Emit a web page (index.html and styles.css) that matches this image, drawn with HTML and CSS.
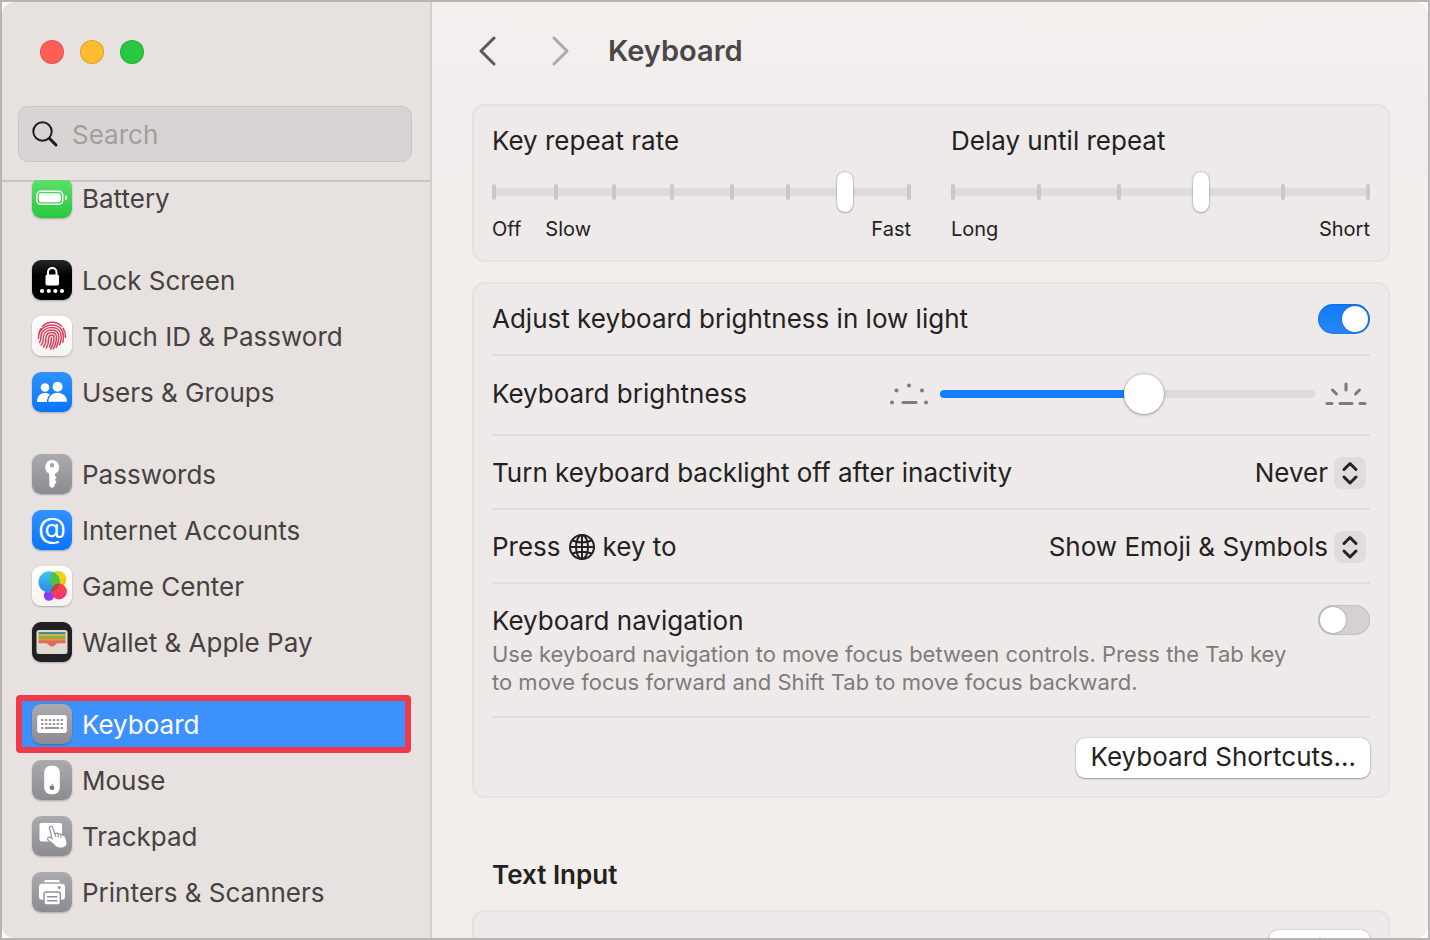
FILE: index.html
```html
<!DOCTYPE html>
<html lang="en">
<head>
<meta charset="utf-8">
<meta name="viewport" content="width=device-width, initial-scale=1">
<title>Keyboard</title>
<link rel="stylesheet" href="styles.css">
</head>
<body>
<div class="frame">
<div class="window">
  <aside class="sidebar">
    <div class="lights">
      <button class="light light-close" aria-label="Close"></button>
      <button class="light light-min" aria-label="Minimize"></button>
      <button class="light light-zoom" aria-label="Zoom"></button>
    </div>
    <label class="search">
      <svg class="search-icon" viewBox="0 0 28 28" aria-hidden="true"><circle cx="10.500" cy="11.500" r="9.200"/><path d="M17.500 18.500l6.500 6.500" class="handle"/></svg>
      <input class="search-input" type="search" placeholder="Search" aria-label="Search">
    </label>
    <nav class="list">
      <div class="group">
        <a class="item" href="#battery">
          <svg class="icon green" viewBox="0 0 40 40" aria-hidden="true"><rect x="4.800" y="13.200" width="26" height="13" rx="4" fill="none" stroke="#fff" stroke-width="1.400"/><rect x="6.800" y="15.200" width="22" height="9" rx="2.200" fill="#fff"/><path d="M33 17c3 1 3 4.500 0 5.500z" fill="#fff"/></svg>
          <span>Battery</span></a>
      </div>
      <div class="group">
        <a class="item" href="#lock">
          <svg class="icon black" viewBox="0 0 40 40" aria-hidden="true"><rect x="13.500" y="14.500" width="13.500" height="11" rx="1.800" fill="#fff"/><path d="M16 15v-3c0-5.500 8.500-5.500 8.500 0v3" fill="none" stroke="#fff" stroke-width="2"/><g fill="#fff"><circle cx="10" cy="31" r="2.100"/><circle cx="16.800" cy="31" r="2.100"/><circle cx="23.400" cy="31" r="2.100"/><circle cx="30" cy="31" r="2.100"/></g></svg>
          <span>Lock Screen</span></a>
        <a class="item" href="#touch-id">
          <svg class="icon white" viewBox="0 0 40 40" aria-hidden="true"><g fill="none" stroke="#d8405c" stroke-width="1.500" stroke-linecap="round"><path d="M10.500 10.200C16 5 24.500 5 29.500 10.200"/><path d="M7 16.500c.6-1.600 1.300-2.900 2.200-4"/><path d="M31 12.200c1.800 2.700 2.600 5.600 2.500 9"/><path d="M6.500 22.500c-.2-8 5.500-13.500 13.500-13.500 7 0 11.300 5 11.500 11.500 0 2-.2 4-.8 5.800"/><path d="M7.500 26.500c1.500-2 1.400-4 1.400-5.500.2-5.800 4.800-9.600 11.100-9.600 5.700 0 9 4 9.200 9.300 0 2.800-.5 5.600-1.500 8"/><path d="M9.200 29.200c2-2.400 2.200-5 2.200-7.700.2-4.500 3.600-7.600 8.500-7.600 4.200 0 6.700 2.800 6.900 6.800 0 3.600-.8 7.500-2.600 10.700"/><path d="M11.500 31c2-2.600 2.500-6 2.500-9 .2-3.300 2.500-5.600 5.800-5.600 2.900 0 4.500 2 4.600 4.400.1 4-1 8.500-3.200 12"/><path d="M14.300 32.200c1.800-3 2.300-6.500 2.300-10 .2-2 1.400-3.200 3.100-3.200 1.500 0 2.300 1.100 2.300 2.500 0 4-1.200 8.100-3.500 11.600"/><path d="M19.400 21.500c0 3.500-.6 6.500-1.800 9.500"/></g></svg>
          <span>Touch ID &amp; Password</span></a>
        <a class="item" href="#users">
          <svg class="icon blue" viewBox="0 0 40 40" aria-hidden="true"><g fill="#fff"><circle cx="13" cy="15.500" r="4.300"/><path d="M5 29.600c0-5.500 3.500-8.600 8-8.600 2 0 3.700.6 5 1.700-2 1.600-3 4-3.200 7.200H5.300z"/><circle cx="25.600" cy="14.700" r="5"/><path d="M16.400 29.800c0-5.500 4-9 9.200-9s9.400 3.500 9.400 9z"/></g></svg>
          <span>Users &amp; Groups</span></a>
      </div>
      <div class="group">
        <a class="item" href="#passwords">
          <svg class="icon gray" viewBox="0 0 40 40" aria-hidden="true"><path fill="#fff" fill-rule="evenodd" d="M20 6a7.200 7.200 0 0 1 3 13.700V22l1.600 1.800-1.800 2 1.800 2.200-1.900 2.200V32L20 34.200 17.300 32V19.700A7.200 7.200 0 0 1 20 6zm0 3a2.200 2.200 0 1 0 0 4.400A2.200 2.200 0 0 0 20 9z"/></svg>
          <span>Passwords</span></a>
        <a class="item" href="#internet">
          <svg class="icon blue" viewBox="0 0 40 40" aria-hidden="true"><text class="at" x="20" y="28" text-anchor="middle">@</text></svg>
          <span>Internet Accounts</span></a>
        <a class="item" href="#game-center">
          <svg class="icon white" viewBox="0 0 40 40" aria-hidden="true">
            <defs>
              <linearGradient id="gc1" x1="0" y1="0" x2="0" y2="1"><stop offset="0" stop-color="#3fc6e6"/><stop offset="1" stop-color="#2d86f0"/></linearGradient>
              <linearGradient id="gc2" x1="0" y1="0" x2="1" y2="1"><stop offset="0" stop-color="#b9da22"/><stop offset="0.600" stop-color="#fbd40c"/><stop offset="1" stop-color="#f9a11b"/></linearGradient>
              <linearGradient id="gc3" x1="0" y1="0" x2="0" y2="1"><stop offset="0" stop-color="#f4503a"/><stop offset="1" stop-color="#fb2c78"/></linearGradient>
              <clipPath id="gcc"><circle cx="17.200" cy="16" r="10.700"/></clipPath>
            </defs>
            <circle cx="17" cy="29.500" r="5.200" fill="#8a3df0"/><circle cx="26" cy="13.300" r="8.400" fill="url(#gc2)"/><circle cx="17.200" cy="16" r="10.700" fill="url(#gc1)"/><circle cx="26" cy="13.300" r="8.400" fill="#4fc24a" clip-path="url(#gcc)"/><circle cx="27" cy="25.500" r="7.900" fill="url(#gc3)"/><circle cx="27" cy="25.500" r="7.900" fill="#b8433f" clip-path="url(#gcc)"/></svg>
          <span>Game Center</span></a>
        <a class="item" href="#wallet">
          <svg class="icon wallet" viewBox="0 0 40 40" aria-hidden="true"><rect x="4.500" y="8" width="31" height="24" rx="2.500" fill="#dfdbd3"/><rect x="6.500" y="10" width="27" height="3" rx="1" fill="#4489a0"/><rect x="6.500" y="12" width="27" height="3" fill="#c9b54a"/><rect x="6.500" y="14.200" width="27" height="3" fill="#8faa3e"/><rect x="6.500" y="16.400" width="27" height="3" fill="#d79a48"/><path d="M6.500 18.500h27v2.700H26c-1.500 0-2 .8-2.600 1.600-1.500 2.300-5.300 2.300-6.800 0-.6-.8-1.100-1.600-2.600-1.600H6.500z" fill="#e4695a"/></svg>
          <span>Wallet &amp; Apple Pay</span></a>
      </div>
      <div class="group">
        <a class="item selected" href="#keyboard" aria-current="page">
          <svg class="icon gray" viewBox="0 0 40 40" aria-hidden="true"><rect x="5.200" y="11" width="29.600" height="18" rx="2.500" fill="#fff"/><g stroke="#98969a" stroke-width="2.200" fill="none"><path d="M9 16h22" stroke-dasharray="2.400 1.520"/><path d="M9 20h22" stroke-dasharray="2.400 1.520"/><path d="M9 24h2.400M12.900 24h14.200M28.600 24H31"/></g></svg>
          <span>Keyboard</span></a>
        <a class="item" href="#mouse">
          <svg class="icon gray" viewBox="0 0 40 40" aria-hidden="true"><rect x="12.200" y="5.800" width="15.600" height="28.400" rx="6.500" fill="#fff"/><path d="M20 25.800c1-.5 1.900-.3 2.300.4-.8.600-.7 1.800.1 2.300-.5 1.300-1.300 1.700-2.300 1.200-1 .5-1.800 0-2.400-1.500-.4-1.800.9-3.100 2.300-2.400zm-.1-.6c0-1 .6-1.600 1.400-1.800 0 1-.5 1.600-1.400 1.800z" fill="#77757a"/></svg>
          <span>Mouse</span></a>
        <a class="item" href="#trackpad">
          <svg class="icon gray" viewBox="0 0 40 40" aria-hidden="true"><rect x="7.500" y="7" width="22.500" height="18.500" rx="2" fill="#fff"/><path d="M17.300 11.500c.9-1.700 3-1.300 3.500.3l2 6c.7-1 2.300-.9 2.800.2.900-.8 2.300-.6 2.900.6 1-.6 2.300-.3 2.800.8 1.300 0 2.200.8 2.500 2l1.200 5c.6 3.200-1.600 5.200-4.500 5.600-4 .6-6.600-.7-8.700-3.200l-5.600-4.600c-1.200-1-.6-3 1.200-3 .9 0 1.800.5 2.600 1.200z" fill="#fff" stroke="#98969a" stroke-width="1.200"/><path d="M23 18l.8 2.500M26 18.800l.6 2.200M28.800 19.500l.5 1.800" stroke="#98969a" stroke-width="1.100" stroke-linecap="round"/></svg>
          <span>Trackpad</span></a>
        <a class="item" href="#printers">
          <svg class="icon gray" viewBox="0 0 40 40" aria-hidden="true"><path d="M12 10.200c.2-1.600 1-2.200 2.500-2.200h11c1.500 0 2.300.6 2.500 2.200z" fill="#fff"/><rect x="7" y="11.800" width="26" height="16" rx="3" fill="#fff"/><circle cx="27.300" cy="15.600" r="1.500" fill="#929096"/><rect x="12" y="20" width="16.400" height="13" rx="2.200" fill="#fff" stroke="#929096" stroke-width="1.500"/><path d="M15.500 24.700h9.400M15.500 28.700h9.400" stroke="#929096" stroke-width="1.500" stroke-linecap="round"/></svg>
          <span>Printers &amp; Scanners</span></a>
      </div>
    </nav>
  </aside>

  <main class="main">
    <header class="header">
      <button class="nav-button" aria-label="Back"><svg viewBox="0 0 20 30" aria-hidden="true"><path d="M17 2L4 15l13 13"/></svg></button>
      <button class="nav-button nav-forward" aria-label="Forward"><svg viewBox="0 0 20 30" aria-hidden="true"><path d="M4 2l13 13L4 28"/></svg></button>
      <h1 class="title">Keyboard</h1>
    </header>

    <section class="card repeat">
      <div class="repeat-field">
        <label for="rate">Key repeat rate</label>
        <div class="ticked">
          <div class="ticks ticks-rate"><i></i><i></i><i></i><i></i><i></i><i></i><i class="bare"></i><i></i></div>
          <input class="tick-slider" id="rate" type="range" min="0" max="7" value="6">
        </div>
        <div class="scale"><span>Off</span><span>Slow</span><span class="end">Fast</span></div>
      </div>
      <div class="repeat-field">
        <label for="delay">Delay until repeat</label>
        <div class="ticked">
          <div class="ticks ticks-delay"><i></i><i></i><i></i><i class="bare"></i><i></i><i></i></div>
          <input class="tick-slider" id="delay" type="range" min="0" max="5" value="3">
        </div>
        <div class="scale"><span>Long</span><span class="end">Short</span></div>
      </div>
    </section>

    <section class="card rows">
      <div class="row">
        <label for="auto">Adjust keyboard brightness in low light</label>
        <input class="switch" id="auto" type="checkbox" role="switch" checked>
      </div>
      <div class="row row-brightness">
        <label for="brightness">Keyboard brightness</label>
        <div class="brightness">
          <svg class="dim" viewBox="0 0 42 24" aria-hidden="true"><g class="dots"><circle cx="4" cy="20.500" r="2"/><circle cx="8.500" cy="8.500" r="2"/><circle cx="21" cy="3.500" r="2"/><circle cx="34" cy="8.500" r="2"/><circle cx="38" cy="20.500" r="2"/></g><path d="M15 20.500h13"/></svg>
          <input class="brightness-slider" id="brightness" type="range" min="0" max="100" value="55">
          <svg class="bright" viewBox="0 0 42 24" aria-hidden="true"><path d="M2 21.500h5M15 21.500h12M35 21.500h5M21 2v6M7.500 8l4 4M34.500 8l-4 4"/></svg>
        </div>
      </div>
      <div class="row row-picker">
        <label for="backlight">Turn keyboard backlight off after inactivity</label>
        <div class="picker">
          <select id="backlight"><option>Never</option></select>
          <svg class="stepper" viewBox="0 0 32 32" aria-hidden="true"><path d="M10 12.500l6-6 6 6M10 20l6 6 6-6"/></svg>
        </div>
      </div>
      <div class="row row-picker">
        <label class="globe-label" for="globe">Press <svg class="globe" viewBox="0 0 28 28" role="img" aria-label="globe"><circle cx="14" cy="14" r="12"/><ellipse cx="14" cy="14" rx="6" ry="12"/><path d="M14 2v24M2 14h24M4.500 7.500c5.500 2.500 13.500 2.500 19 0M4.500 20.500c5.500-2.500 13.500-2.500 19 0"/></svg> key to</label>
        <div class="picker">
          <select id="globe"><option>Show Emoji &amp; Symbols</option></select>
          <svg class="stepper" viewBox="0 0 32 32" aria-hidden="true"><path d="M10 12.500l6-6 6 6M10 20l6 6 6-6"/></svg>
        </div>
      </div>
      <div class="row row-nav">
        <div class="nav-text">
          <label for="nav">Keyboard navigation</label>
          <p class="hint">Use keyboard navigation to move focus between controls. Press the Tab key to move focus forward and Shift Tab to move focus backward.</p>
        </div>
        <input class="switch" id="nav" type="checkbox" role="switch">
      </div>
      <div class="row row-action">
        <button class="push">Keyboard Shortcuts...</button>
      </div>
    </section>

    <h2 class="section-title">Text Input</h2>
    <section class="card input-card">
      <button class="push">Edit...</button>
    </section>
  </main>
</div>
</div>
</body>
</html>
```
FILE: styles.css
```css
* { box-sizing: border-box; }
body, h1, h2, p { margin: 0; }
body {
  font-family: Inter, "Liberation Sans", sans-serif;
  font-size: 26px;
  line-height: 32px;
  color: #242221;
}
button, input, select { font: inherit; color: inherit; margin: 0; }
button { border: 0; padding: 0; background: none; }
.frame {
  height: 100vh;
  border: 2px solid #b8b4b3;
  background: #fff;
  overflow: hidden;
}
.window {
  display: flex;
  height: 100%;
  border-radius: 12px;
  overflow: hidden;
}

.sidebar {
  display: flex;
  flex-direction: column;
  flex: 0 0 430px;
  min-width: 0;
  background: #e7e1e0;
  border-right: 2px solid #d3cecd;
}
.lights { display: flex; gap: 16px; padding: 38px 38px 0; }
.light { width: 24px; height: 24px; border-radius: 50%; border: 1px solid #0002; }
.light-close { background: #ff5f57; }
.light-min { background: #febc2e; }
.light-zoom { background: #28c840; }
.search {
  display: flex;
  align-items: center;
  gap: 12px;
  height: 56px;
  margin: 42px 18px 18px 16px;
  padding: 0 13px;
  border: 1px solid #cbc6c5;
  border-radius: 10px;
  background: #d9d4d3;
}
.search-icon { flex: none; width: 28px; height: 28px; fill: none; stroke: #1d1b1b; stroke-width: 2; stroke-linecap: round; }
.search-icon .handle { stroke-width: 3; }
.search-input {
  flex: 1;
  min-width: 0;
  padding: 2px 0 0;
  border: 0;
  background: none;
  outline: 0;
  appearance: none;
}
.search-input::placeholder { color: #a29e9d; opacity: 1; }

.list {
  flex: 1;
  min-height: 0;
  overflow: hidden;
  padding: 0 20px 0 15px;
  box-shadow: inset 0 2px #c9c4c3;
}
.group { margin-bottom: 26px; }
.group:first-child { margin-top: -10px; }
.item {
  display: flex;
  align-items: center;
  gap: 10px;
  height: 56px;
  padding-left: 15px;
  color: #464241;
  text-decoration: none;
}
.item span { padding-top: 2px; }
.selected {
  background: #3d91fd;
  color: #fff;
  outline: 6px solid #f03a4a;
  outline-offset: -5px;
  border-radius: 3px;
}
.icon { flex: none; width: 40px; height: 40px; border-radius: 9px; box-shadow: 0 1px 2px #0004; }
.green { background: linear-gradient(#5ee06a, #27c93f); }
.black { background: linear-gradient(#262626, #000 40%); }
.white { background: linear-gradient(#fff, #f6f4f3); }
.blue { background: linear-gradient(#2f93ff, #0a74fb); }
.gray { background: linear-gradient(#abaaae, #8c8b90); }
.wallet { background: #212022; }
.at { font-size: 29px; font-weight: 400; fill: #fff; }

.main {
  flex: 1;
  min-width: 0;
  overflow: hidden;
  padding: 0 38px 0 40px;
  background: linear-gradient(#f4eeed, #f3eded 90px, #f1eeec 180px);
}
.header { display: flex; align-items: center; height: 98px; margin-bottom: 4px; }
.nav-button { margin-left: 5px; width: 20px; height: 30px; }
.nav-button svg { display: block; width: 20px; height: 30px; fill: none; stroke: #5c5857; stroke-width: 3; stroke-linecap: round; stroke-linejoin: round; }
.nav-forward { margin-left: 53px; }
.nav-forward svg { stroke: #aeaaa9; }
.title { margin-left: 38px; font-size: 29px; font-weight: 600; color: #4b4746; }

.card { border: 2px solid #e6e2e1; border-radius: 12px; background: #edeae9; }
.repeat { display: grid; grid-template-columns: 1fr 1fr; gap: 40px; padding: 19px 18px 15px; }
.repeat-field { display: flex; flex-direction: column; }
.ticked { display: grid; margin-top: 14px; }
.ticks, .tick-slider { grid-area: 1 / 1; }
.ticks {
  display: grid;
  align-self: center;
  height: 16px;
  background: linear-gradient(#dfdbda, #dfdbda) center / 100% 8px no-repeat;
}
.ticks-rate { grid-template-columns: 62fr 58fr 58fr 60fr 56fr 57fr 64fr 4px; }
.ticks-delay { grid-template-columns: 86fr 80fr 82fr 82fr 85fr 4px; }
.ticks i { width: 4px; border-radius: 2px; background: #cbc7c6; }
.ticks .bare { visibility: hidden; }
.tick-slider { appearance: none; width: 100%; height: 42px; background: none; }
.tick-slider::-webkit-slider-thumb {
  appearance: none;
  width: 16px;
  height: 40px;
  border-radius: 8px;
  background: #fff;
  box-shadow: 0 0 2px #0006, 0 1px 2px #0003;
}
.scale { display: flex; gap: 24px; font-size: 20px; }
.scale .end { margin-left: auto; }

.rows { margin-top: 20px; padding: 0 18px; }
.row {
  display: flex;
  align-items: center;
  justify-content: space-between;
  min-height: 74px;
  border-bottom: 2px solid #e1dddc;
}
.row:first-child { min-height: 72px; }
.row:last-child { border-bottom: 0; }
.row-brightness { min-height: 80px; padding-bottom: 2px; }
.row-picker { padding-top: 2px; }
.row-action { min-height: 78px; padding-top: 2px; justify-content: flex-end; }
.brightness { display: flex; align-items: center; gap: 10px; padding-right: 3px; }
.dim, .bright { width: 42px; height: 24px; fill: none; stroke: #7d7a79; stroke-width: 3; stroke-linecap: round; }
.dots { fill: #7d7a79; stroke: none; }
.brightness-slider { appearance: none; width: 375px; height: 40px; background: none; }
.brightness-slider::-webkit-slider-runnable-track {
  height: 8px;
  border-radius: 4px;
  background: linear-gradient(90deg, #157efb 55%, #dedad9 55%);
}
.brightness-slider::-webkit-slider-thumb {
  appearance: none;
  width: 40px;
  height: 40px;
  margin-top: -16px;
  border-radius: 50%;
  background: #fff;
  box-shadow: 0 0 2px #0005, 0 1px 3px #0004;
}
.switch {
  appearance: none;
  flex: none;
  display: flex;
  align-items: center;
  width: 52px;
  height: 30px;
  padding: 0 2px;
  border-radius: 15px;
  background: #d5d1d0;
  box-shadow: inset 0 0 2px #0004;
}
.switch::before { content: ""; width: 26px; height: 26px; border-radius: 50%; background: #fff; box-shadow: 0 0 2px #0006; }
.switch:checked { justify-content: flex-end; background: linear-gradient(#0f7bfb, #2a86f5); }
.picker { display: flex; align-items: center; gap: 6px; padding-right: 4px; }
.picker select { appearance: none; padding: 0; border: 0; background: none; text-align: right; }
.stepper { width: 32px; height: 32px; border-radius: 8px; background: #e0dcdb; fill: none; stroke: #242221; stroke-width: 3; stroke-linecap: round; stroke-linejoin: round; }
.globe-label { display: flex; align-items: center; gap: 7px; }
.globe { width: 28px; height: 28px; fill: none; stroke: #242221; stroke-width: 2; }
.row-nav { align-items: flex-start; min-height: 134px; padding-top: 21px; }
.nav-text { flex: 1; }
.nav-text label { display: block; }
.hint { max-width: 820px; margin-top: 3px; font-size: 22px; line-height: 28px; color: #7f7b7a; }
.push {
  height: 40px;
  padding: 0 14px 2px;
  border-radius: 9px;
  background: #fff;
  box-shadow: 0 0 2px #0004, 0 1px 2px #0004;
}
.section-title { margin: 61px 20px 19px; font-size: 26px; font-weight: 600; }
.input-card { display: flex; justify-content: flex-end; padding: 18px; }
.input-card .push { padding: 0 16px 2px; }
```
